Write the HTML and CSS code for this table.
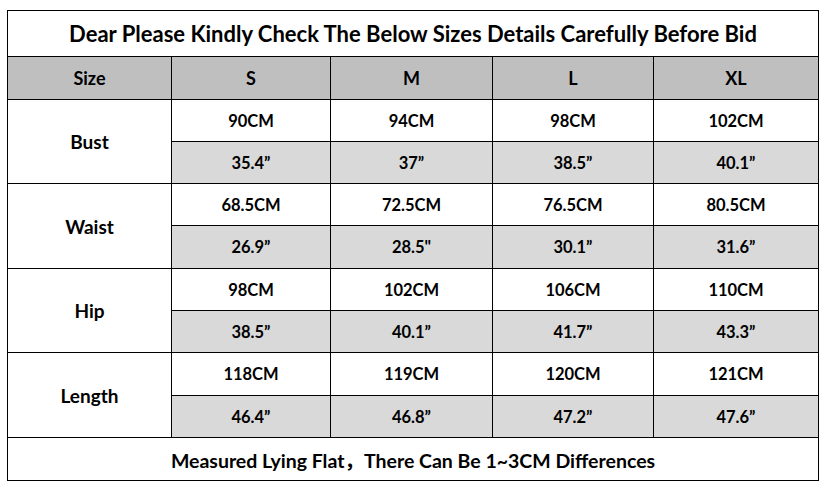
FILE: index.html
```html
<!DOCTYPE html>
<html>
<head>
<meta charset="utf-8">
<link rel="stylesheet" href="styles.css">
</head>
<body>
<div class="chart">
  <div class="cell title">Dear Please Kindly Check The Below Sizes Details Carefully Before Bid</div>
  <div class="cell head">Size</div>
  <div class="cell head">S</div>
  <div class="cell head">M</div>
  <div class="cell head">L</div>
  <div class="cell head">XL</div>

  <div class="cell label">Bust</div>
  <div class="cell">90CM</div><div class="cell">94CM</div><div class="cell">98CM</div><div class="cell">102CM</div>
  <div class="cell inch">35.4”</div><div class="cell inch">37”</div><div class="cell inch">38.5”</div><div class="cell inch">40.1”</div>

  <div class="cell label">Waist</div>
  <div class="cell">68.5CM</div><div class="cell">72.5CM</div><div class="cell">76.5CM</div><div class="cell">80.5CM</div>
  <div class="cell inch">26.9”</div><div class="cell inch">28.5"</div><div class="cell inch">30.1”</div><div class="cell inch">31.6”</div>

  <div class="cell label">Hip</div>
  <div class="cell">98CM</div><div class="cell">102CM</div><div class="cell">106CM</div><div class="cell">110CM</div>
  <div class="cell inch">38.5”</div><div class="cell inch">40.1”</div><div class="cell inch">41.7”</div><div class="cell inch">43.3”</div>

  <div class="cell label">Length</div>
  <div class="cell">118CM</div><div class="cell">119CM</div><div class="cell">120CM</div><div class="cell">121CM</div>
  <div class="cell inch">46.4”</div><div class="cell inch">46.8”</div><div class="cell inch">47.2”</div><div class="cell inch">47.6”</div>

  <div class="cell foot">Measured Lying Flat，There Can Be 1~3CM Differences</div>
</div>
</body>
</html>
```
FILE: styles.css
```css
html, body {
  margin: 0;
  background: #ffffff;
}
body {
  padding: 10px 0 0 7px;
  font-family: Lato, "Noto Sans CJK SC", sans-serif;
  font-weight: 700;
  color: #000;
}
.chart {
  display: grid;
  width: 812px;
  box-sizing: border-box;
  grid-template-columns: 163px 158px 161px 160px 164px;
  grid-template-rows: 45px 42px 41px 41px 41px 42px 41px 41px 42px 41px 42px;
  gap: 1px;
  padding: 1px;
  background: #000;
}
.cell {
  background: #fff;
  display: flex;
  align-items: center;
  justify-content: center;
  font-size: 16.5px;
  white-space: nowrap;
}
.title {
  grid-column: 1 / 6;
  font-size: 22px;
}
.head {
  background: #bfbfbf;
  font-size: 18px;
}
.label {
  grid-row: span 2;
  font-size: 19px;
}
.inch {
  background: #d9d9d9;
}
.foot {
  grid-column: 1 / 6;
  font-size: 19.5px;
}
```
